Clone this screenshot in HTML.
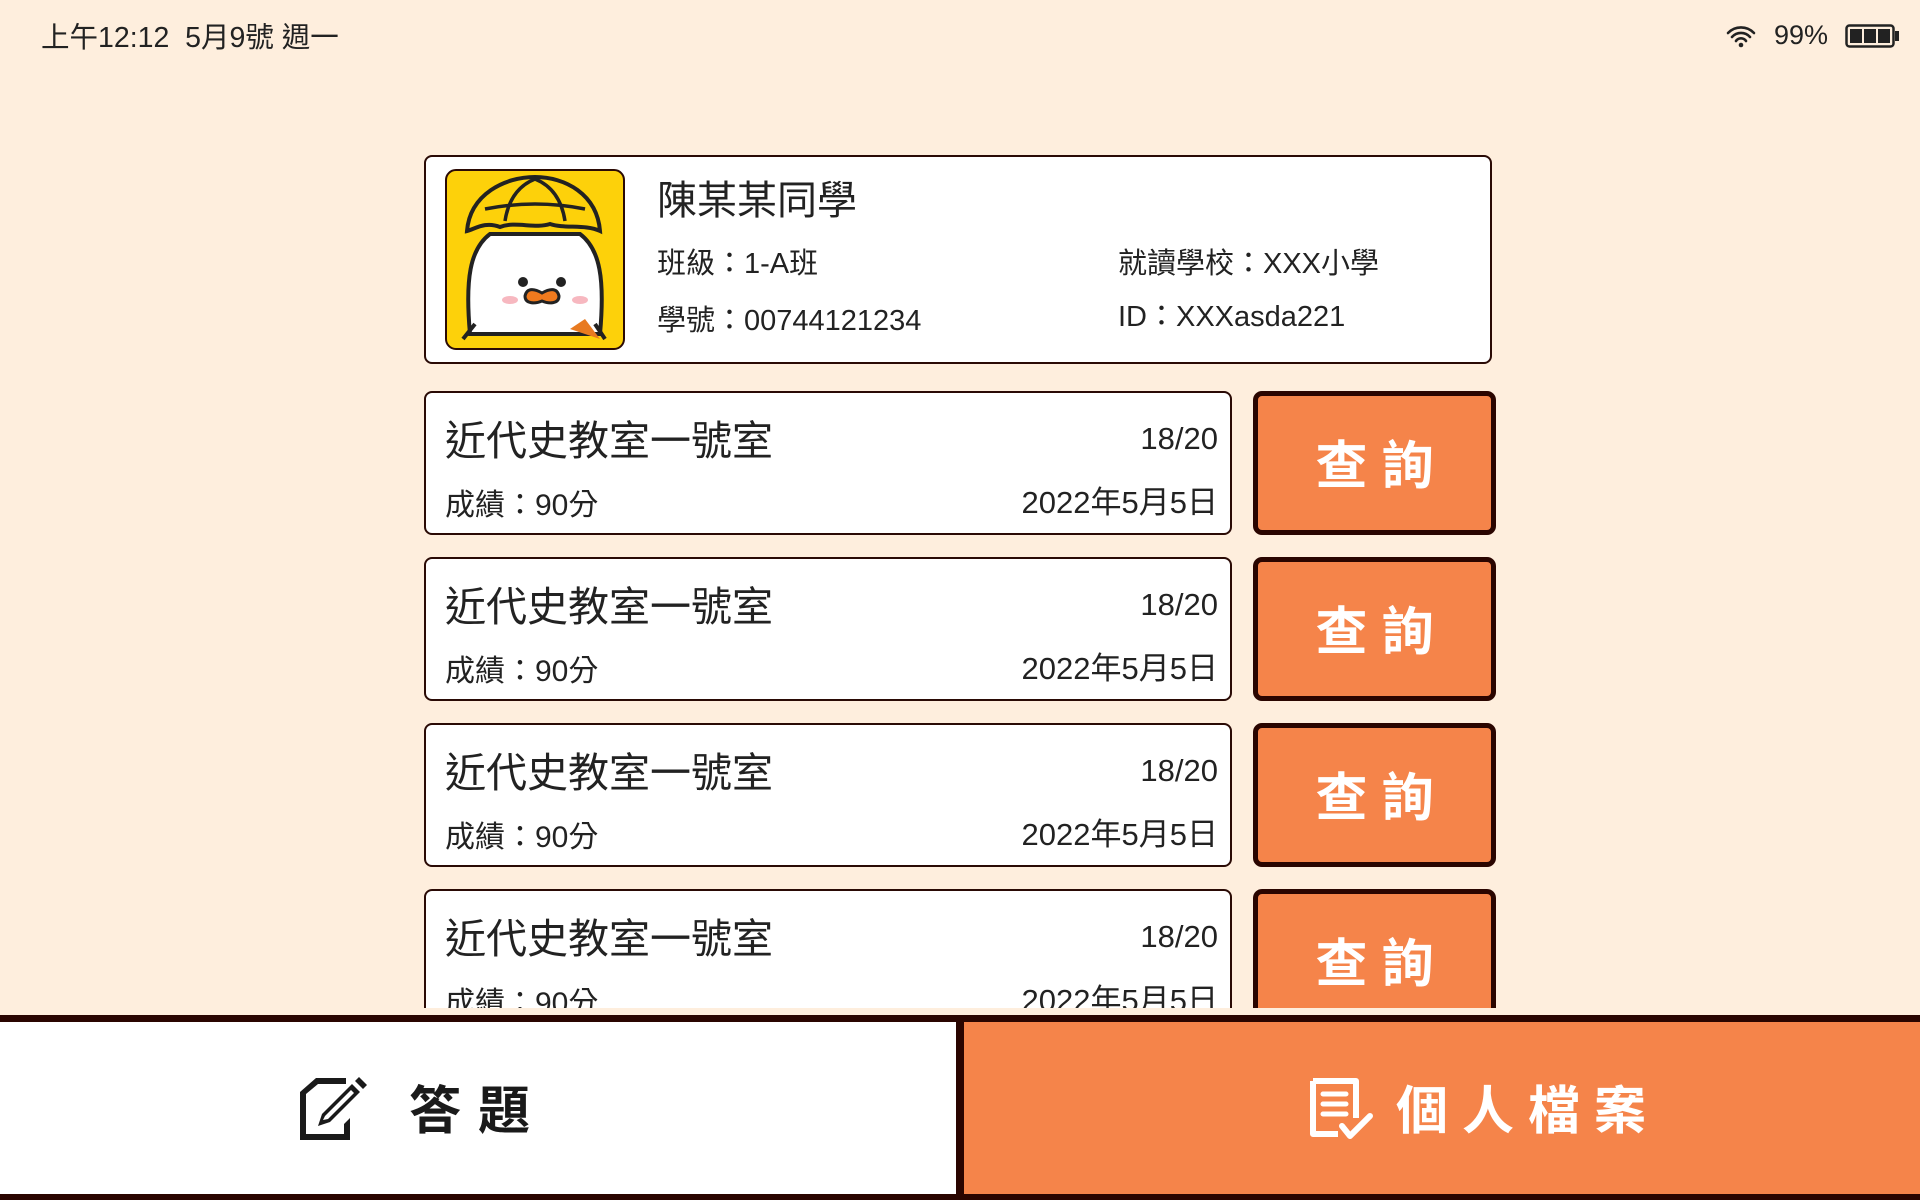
<!DOCTYPE html>
<html><head><meta charset="utf-8">
<style>
*{margin:0;padding:0;box-sizing:border-box}
body{width:1920px;height:1200px;background:#FEEEDD;position:relative;overflow:hidden;font-family:"Liberation Sans","Noto Sans CJK TC",sans-serif;color:#222}
.abs{position:absolute;white-space:nowrap}
.card{position:absolute;left:424px;width:808px;height:144px;background:#fff;border:2px solid #2a0a05;border-radius:8px}
.btn{position:absolute;left:1253px;width:243px;height:144px;background:#F5844A;border:5px solid #2a0500;border-radius:9px;color:#fff;font-size:52px;font-weight:bold;text-align:center;line-height:142px;letter-spacing:14px;padding-left:14px}
.t{position:absolute;left:19px;top:14px;font-size:41px}
.s{position:absolute;right:12px;top:28px;font-size:31px}
.g{position:absolute;left:19px;top:87px;font-size:30px}
.d{position:absolute;right:12px;top:84px;font-size:31px}
</style></head><body>
<div class="abs" style="left:41px;top:15px;font-size:28.5px">上午12:12&nbsp; 5月9號 週一</div>
<svg class="abs" style="left:1725px;top:24px" width="32" height="24" viewBox="0 0 32 24"><path d="M3 9a18 18 0 0 1 26 0M7 13a12 12 0 0 1 18 0M11 17a6 6 0 0 1 10 0" stroke="#222" stroke-width="2.6" fill="none" stroke-linecap="round"/><circle cx="16" cy="21" r="2.3" fill="#222"/></svg>
<div class="abs" style="left:1774px;top:20px;font-size:27px">99%</div>
<svg class="abs" style="left:1845px;top:24px" width="56" height="24" viewBox="0 0 56 24"><rect x="1.5" y="1.5" width="47" height="21" rx="3" fill="none" stroke="#222" stroke-width="2.5"/><rect x="50" y="7" width="4" height="10" fill="#222"/><rect x="5" y="5" width="12" height="14" fill="#222"/><rect x="19" y="5" width="12" height="14" fill="#222"/><rect x="33" y="5" width="12" height="14" fill="#222"/></svg>

<div class="abs" style="left:424px;top:155px;width:1068px;height:209px;background:#fff;border:2px solid #2a0a05;border-radius:8px"></div>
<svg class="abs" style="left:445px;top:169px" width="180" height="181" viewBox="0 0 180 181">
<rect x="1" y="1" width="178" height="179" rx="10" fill="#FDD10A" stroke="#2a0a05" stroke-width="2"/>
<path d="M25 165 C20 110 25 80 45 65 L135 65 C155 80 160 110 155 165 Z" fill="#fff" stroke="#222" stroke-width="4"/>
<path d="M18 170 L30 155 M160 170 L150 155" stroke="#222" stroke-width="4"/>
<path d="M125 160 L155 170 L140 150Z" fill="#E87A20"/>
<path d="M22 62 C25 25 60 8 90 8 C120 8 152 25 155 62 C140 55 120 60 105 55 C90 60 70 52 55 58 C40 52 30 60 22 62Z" fill="#FDD10A" stroke="#222" stroke-width="4"/>
<path d="M40 40 Q90 30 140 40 M60 52 Q65 20 90 10 M120 52 Q115 20 90 10" stroke="#222" stroke-width="3.5" fill="none"/>
<circle cx="78" cy="113" r="5" fill="#222"/><circle cx="116" cy="113" r="5" fill="#222"/>
<ellipse cx="65" cy="131" rx="8" ry="4" fill="#F7B8C0"/><ellipse cx="135" cy="131" rx="8" ry="4" fill="#F7B8C0"/>
<path d="M80 127 C82 118 90 120 97 124 C104 120 112 118 114 127 C114 135 104 135 97 132 C90 135 80 135 80 127Z" fill="#F07A1E" stroke="#222" stroke-width="3"/>
</svg>
<div class="abs" style="left:657px;top:168px;font-size:40px">陳某某同學</div>
<div class="abs" style="left:657px;top:240px;font-size:29px">班級：1-A班</div>
<div class="abs" style="left:657px;top:297px;font-size:29px">學號：00744121234</div>
<div class="abs" style="left:1118px;top:240px;font-size:29px">就讀學校：XXX小學</div>
<div class="abs" style="left:1118px;top:293px;font-size:29px">ID：XXXasda221</div>

<div style="position:absolute;left:0;top:0;width:1920px;height:1008px;overflow:hidden">
<div class="card" style="top:391px"><div class="t">近代史教室一號室</div><div class="s">18/20</div><div class="g">成績：90分</div><div class="d">2022年5月5日</div></div>
<div class="btn" style="top:391px">查詢</div>
<div class="card" style="top:557px"><div class="t">近代史教室一號室</div><div class="s">18/20</div><div class="g">成績：90分</div><div class="d">2022年5月5日</div></div>
<div class="btn" style="top:557px">查詢</div>
<div class="card" style="top:723px"><div class="t">近代史教室一號室</div><div class="s">18/20</div><div class="g">成績：90分</div><div class="d">2022年5月5日</div></div>
<div class="btn" style="top:723px">查詢</div>
<div class="card" style="top:889px"><div class="t">近代史教室一號室</div><div class="s">18/20</div><div class="g">成績：90分</div><div class="d">2022年5月5日</div></div>
<div class="btn" style="top:889px">查詢</div>
</div>

<div class="abs" style="left:0;top:1015px;width:1920px;height:185px;background:#2a0500"></div>
<div class="abs" style="left:0;top:1022px;width:956px;height:172px;background:#fff"></div>
<div class="abs" style="left:964px;top:1022px;width:956px;height:172px;background:#F5844A"></div>
<svg class="abs" style="left:296px;top:1076px" width="80" height="66" viewBox="0 0 80 66">
<path d="M20 2 H50 V8 H22 L10 18 V58 H48 V48 L54 42 V64 H4 V16 Z" fill="#1a1a1a"/>
<path d="M22 50 L26 38 L56 8 L64 16 L34 46 Z" fill="#1a1a1a"/><path d="M27 44 L29 40 L55 14 L58 17 L32 43Z" fill="#fff"/>
<path d="M59 5 L63 1 L71 9 L67 13Z" fill="#1a1a1a"/>
</svg>
<div class="abs" style="left:409px;top:1069px;font-size:52px;font-weight:bold;letter-spacing:17px;color:#1a1a1a">答題</div>
<svg class="abs" style="left:1308px;top:1076px" width="66" height="68" viewBox="0 0 66 68">
<path d="M5 5 H48 V42 M5 5 V58 H30" stroke="#fff" stroke-width="6" fill="none" stroke-linejoin="round"/>
<path d="M15 18 H38 M15 28 H38 M15 38 H38" stroke="#fff" stroke-width="5" stroke-linecap="round"/>
<path d="M34 50 L42 60 L62 40" stroke="#fff" stroke-width="6" fill="none" stroke-linecap="round" stroke-linejoin="round"/>
</svg>
<div class="abs" style="left:1396px;top:1069px;font-size:52px;font-weight:bold;letter-spacing:14px;color:#fff">個人檔案</div>
</body></html>
